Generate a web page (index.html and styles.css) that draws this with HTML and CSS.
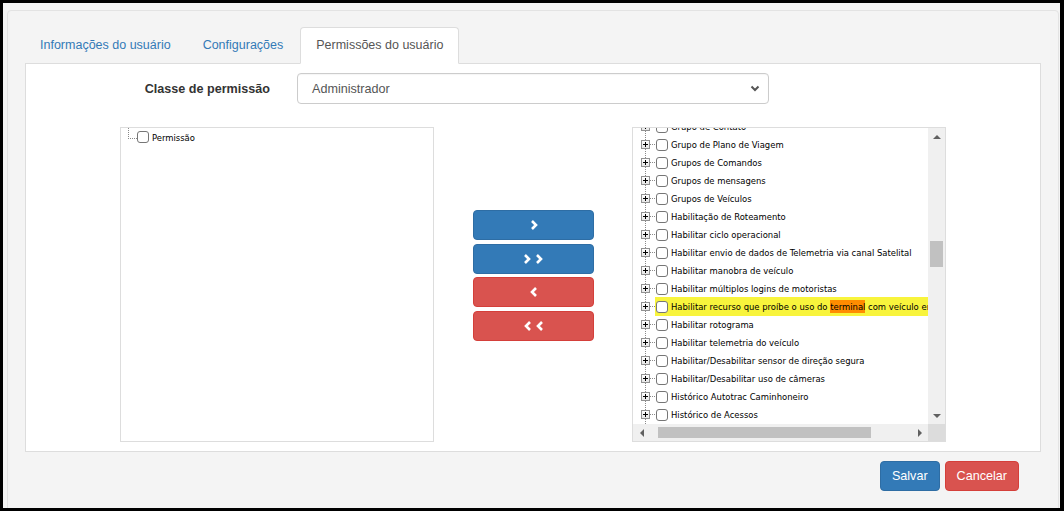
FILE: index.html
```html
<!DOCTYPE html>
<html lang="pt">
<head>
<meta charset="utf-8">
<title>Permissões do usuário</title>
<link rel="stylesheet" href="styles.css">
</head>
<body>
<div class="screen">
  <div class="panel">
    <ul class="tabs">
      <li class="tab">Informações do usuário</li>
      <li class="tab">Configurações</li>
      <li class="tab active">Permissões do usuário</li>
    </ul>
    <div class="content">
      <div class="field">
        <label class="field-label">Classe de permissão</label>
        <div class="select">
          <span>Administrador</span>
          <svg class="select-caret" width="10" height="7" viewBox="0 0 10 7"><polyline points="1.5,1.5 5,5 8.5,1.5" fill="none" stroke="#555" stroke-width="2"/></svg>
        </div>
      </div>
      <div class="picker">
        <div class="tree-box tree-left">
          <div class="root-node">
            <span class="root-connector"></span>
            <span class="cb"></span>
            <span class="node-label">Permissão</span>
          </div>
        </div>
        <div class="moves">
          <button class="move move-blue"><svg width="10" height="12" viewBox="0 0 10 12"><polyline points="3,2 7,6 3,10" fill="none" stroke="#fff" stroke-width="2.6"/></svg></button>
          <button class="move move-blue"><svg width="24" height="12" viewBox="0 0 24 12"><polyline points="3,2 7,6 3,10" fill="none" stroke="#fff" stroke-width="2.6"/><polyline points="15,2 19,6 15,10" fill="none" stroke="#fff" stroke-width="2.6"/></svg></button>
          <button class="move move-red"><svg width="10" height="12" viewBox="0 0 10 12"><polyline points="7,2 3,6 7,10" fill="none" stroke="#fff" stroke-width="2.6"/></svg></button>
          <button class="move move-red"><svg width="24" height="12" viewBox="0 0 24 12"><polyline points="8,2 4,6 8,10" fill="none" stroke="#fff" stroke-width="2.6"/><polyline points="20,2 16,6 20,10" fill="none" stroke="#fff" stroke-width="2.6"/></svg></button>
        </div>
        <div class="tree-box tree-right">
          <div class="viewport">
            <div class="list">
              <div class="row"><span class="exp"></span><span class="hline"></span><span class="item"><span class="cb"></span><span class="node-label">Grupo de Contato</span></span></div>
              <div class="row"><span class="exp"></span><span class="hline"></span><span class="item"><span class="cb"></span><span class="node-label">Grupo de Plano de Viagem</span></span></div>
              <div class="row"><span class="exp"></span><span class="hline"></span><span class="item"><span class="cb"></span><span class="node-label">Grupos de Comandos</span></span></div>
              <div class="row"><span class="exp"></span><span class="hline"></span><span class="item"><span class="cb"></span><span class="node-label">Grupos de mensagens</span></span></div>
              <div class="row"><span class="exp"></span><span class="hline"></span><span class="item"><span class="cb"></span><span class="node-label">Grupos de Veículos</span></span></div>
              <div class="row"><span class="exp"></span><span class="hline"></span><span class="item"><span class="cb"></span><span class="node-label">Habilitação de Roteamento</span></span></div>
              <div class="row"><span class="exp"></span><span class="hline"></span><span class="item"><span class="cb"></span><span class="node-label">Habilitar ciclo operacional</span></span></div>
              <div class="row"><span class="exp"></span><span class="hline"></span><span class="item"><span class="cb"></span><span class="node-label">Habilitar envio de dados de Telemetria via canal Satelital</span></span></div>
              <div class="row"><span class="exp"></span><span class="hline"></span><span class="item"><span class="cb"></span><span class="node-label">Habilitar manobra de veículo</span></span></div>
              <div class="row"><span class="exp"></span><span class="hline"></span><span class="item"><span class="cb"></span><span class="node-label">Habilitar múltiplos logins de motoristas</span></span></div>
              <div class="row row-hl"><span class="exp"></span><span class="hline"></span><span class="item"><span class="cb"></span><span class="node-label">Habilitar recurso que proíbe o uso do <mark class="match">terminal</mark> com veículo em movimento</span></span></div>
              <div class="row"><span class="exp"></span><span class="hline"></span><span class="item"><span class="cb"></span><span class="node-label">Habilitar rotograma</span></span></div>
              <div class="row"><span class="exp"></span><span class="hline"></span><span class="item"><span class="cb"></span><span class="node-label">Habilitar telemetria do veículo</span></span></div>
              <div class="row"><span class="exp"></span><span class="hline"></span><span class="item"><span class="cb"></span><span class="node-label">Habilitar/Desabilitar sensor de direção segura</span></span></div>
              <div class="row"><span class="exp"></span><span class="hline"></span><span class="item"><span class="cb"></span><span class="node-label">Habilitar/Desabilitar uso de câmeras</span></span></div>
              <div class="row"><span class="exp"></span><span class="hline"></span><span class="item"><span class="cb"></span><span class="node-label">Histórico Autotrac Caminhoneiro</span></span></div>
              <div class="row"><span class="exp"></span><span class="hline"></span><span class="item"><span class="cb"></span><span class="node-label">Histórico de Acessos</span></span></div>
              <div class="row"><span class="exp"></span><span class="hline"></span><span class="item"><span class="cb"></span><span class="node-label">Histórico de Alertas</span></span></div>
            </div>
          </div>
          <div class="vscroll">
            <span class="arrow arrow-up"></span>
            <span class="vtrack"><span class="vthumb"></span></span>
            <span class="arrow arrow-down"></span>
          </div>
          <div class="hscroll">
            <span class="arrow arrow-left"></span>
            <span class="htrack"><span class="hthumb"></span></span>
            <span class="arrow arrow-right"></span>
          </div>
          <div class="corner"></div>
        </div>
      </div>
    </div>
    <div class="actions">
      <button class="btn btn-primary">Salvar</button>
      <button class="btn btn-danger">Cancelar</button>
    </div>
  </div>
</div>
</body>
</html>
```
FILE: styles.css
```css
* { box-sizing: border-box; }
html, body { margin: 0; padding: 0; }
body {
  background: #000;
  width: 1064px;
  height: 511px;
  overflow: hidden;
  font-family: "Liberation Sans", Arial, sans-serif;
  font-size: 12.6px;
  color: #333;
}
.screen {
  margin: 3px 0 0 3px;
  width: 1057px;
  height: 505px;
  background: #f4f4f4;
  overflow: hidden;
  padding: 7px 1px 0 4px;
}
.panel {
  height: 520px;
  border: 1px solid #e3e3e3;
  border-radius: 4px;
  background: #f4f4f4;
  padding: 16px 0 0 17px;
}
.tabs {
  list-style: none;
  margin: 0 0 -1px 0;
  padding: 0;
  display: flex;
  position: relative;
  z-index: 1;
  font-size: 12.5px;
}
.tab {
  height: 37px;
  line-height: 35px;
  padding: 0 14px;
  margin-right: 2px;
  color: #337ab7;
  border: 1px solid transparent;
  border-radius: 4px 4px 0 0;
}
.tab.active {
  color: #555;
  background: #fff;
  border-color: #ddd;
  border-bottom-color: #fff;
  padding: 0 15px;
}
.content {
  width: 1016px;
  height: 389px;
  background: #fff;
  border: 1px solid #ddd;
  padding: 9px 0 0 0;
}
.field {
  display: flex;
  align-items: center;
}
.field-label {
  width: 244px;
  text-align: right;
  font-weight: bold;
  color: #333;
  margin-right: 27px;
}
.select {
  width: 472px;
  height: 31px;
  border: 1px solid #ccc;
  border-radius: 4px;
  display: flex;
  align-items: center;
  justify-content: space-between;
  padding: 0 8px 0 14px;
  color: #555;
  box-shadow: inset 0 1px 1px rgba(0,0,0,.04);
}
.select-caret { display: block; }
.picker {
  display: flex;
  margin-top: 23px;
  padding-left: 94px;
}
.tree-box {
  width: 314px;
  height: 315px;
  border: 1px solid #ddd;
  background: #fff;
  font-family: "DejaVu Sans Condensed", "DejaVu Sans", sans-serif;
  font-stretch: condensed;
  font-size: 9.4px;
  color: #000;
}
.tree-left { margin-right: 39px; }
.root-node {
  display: flex;
  align-items: center;
  height: 18px;
  margin-top: 0;
  padding-left: 7px;
}
.root-connector {
  width: 9px;
  height: 11px;
  align-self: flex-start;
  border-left: 1px dotted #888;
  border-bottom: 1px dotted #888;
}
.cb {
  display: inline-block;
  width: 12px;
  height: 12px;
  border: 1px solid #767676;
  border-radius: 3px;
  background: #fff;
  flex: none;
}
.node-label {
  margin-left: 3px;
  white-space: nowrap;
}
.moves {
  width: 121px;
  margin-right: 38px;
  padding-top: 83px;
  display: flex;
  flex-direction: column;
  gap: 3.5px;
}
.move {
  height: 30px;
  border-radius: 4px;
  border: 1px solid;
  display: flex;
  align-items: center;
  justify-content: center;
  padding: 0;
}
.move svg { display: block; }
.move-blue { background: #337ab7; border-color: #2e6da4; }
.move-red { background: #d9534f; border-color: #d43f3a; }
.tree-right {
  display: grid;
  grid-template-columns: 1fr 17px;
  grid-template-rows: 1fr 17px;
}
.viewport {
  overflow: hidden;
}
.list {
  margin-top: -11px;
  padding-bottom: 20px;
  background: repeating-linear-gradient(to bottom, #8a8a8a 0 1px, transparent 1px 2px) no-repeat 12px 0 / 1px 100%;
}
.row {
  height: 18px;
  display: flex;
  align-items: center;
  padding-left: 8px;
  white-space: nowrap;
}
.exp {
  width: 9px;
  height: 9px;
  border: 1px solid #919191;
  background:
    linear-gradient(#000, #000) center / 5px 1px no-repeat,
    linear-gradient(#000, #000) center / 1px 5px no-repeat,
    linear-gradient(#fff, #e6e6e6);
  flex: none;
}
.hline {
  width: 5px;
  height: 1px;
  flex: none;
  background: repeating-linear-gradient(to right, #8a8a8a 0 1px, transparent 1px 2px);
}
.item {
  display: flex;
  align-items: center;
  height: 19px;
  padding-left: 1px;
  flex: 1;
}
.item .cb { margin-top: 2px; }
.row-hl .item { background: #f8f43c; }
.match {
  background: #ff8c00;
  color: #000;
  padding: 1px 0;
}
.vscroll {
  background: #f0f0f0;
  display: flex;
  flex-direction: column;
  align-items: center;
}
.vtrack {
  flex: 1;
  width: 100%;
  padding: 96px 2px 0 2px;
}
.vthumb {
  display: block;
  width: 100%;
  height: 26px;
  background: #c1c1c1;
}
.hscroll {
  background: #f0f0f0;
  display: flex;
  align-items: center;
}
.htrack {
  flex: 1;
  height: 100%;
  padding: 3px 0 3px 8px;
}
.hthumb {
  display: block;
  width: 213px;
  height: 100%;
  background: #c1c1c1;
}
.corner { background: #dcdcdc; }
.arrow {
  width: 17px;
  height: 17px;
  flex: none;
  position: relative;
}
.arrow::after {
  content: "";
  position: absolute;
  left: 50%;
  top: 50%;
  width: 0;
  height: 0;
  border: 4px solid transparent;
}
.arrow-up::after { border-bottom-color: #606060; border-top-width: 0; margin: -2px 0 0 -4px; }
.arrow-down::after { border-top-color: #606060; border-bottom-width: 0; margin: -2px 0 0 -4px; }
.arrow-left::after { border-right-color: #606060; border-left-width: 0; margin: -4px 0 0 -2px; }
.arrow-right::after { border-left-color: #606060; border-right-width: 0; margin: -4px 0 0 -2px; }
.actions {
  width: 1016px;
  display: flex;
  justify-content: flex-end;
  gap: 5px;
  padding: 9px 22px 0 0;
}
.btn {
  height: 30px;
  padding: 0 11px;
  border: 1px solid;
  border-radius: 4px;
  color: #fff;
  font-family: "Liberation Sans", Arial, sans-serif;
  font-size: 12.6px;
}
.btn-primary { background: #337ab7; border-color: #2e6da4; }
.btn-danger { background: #d9534f; border-color: #d43f3a; }
```
